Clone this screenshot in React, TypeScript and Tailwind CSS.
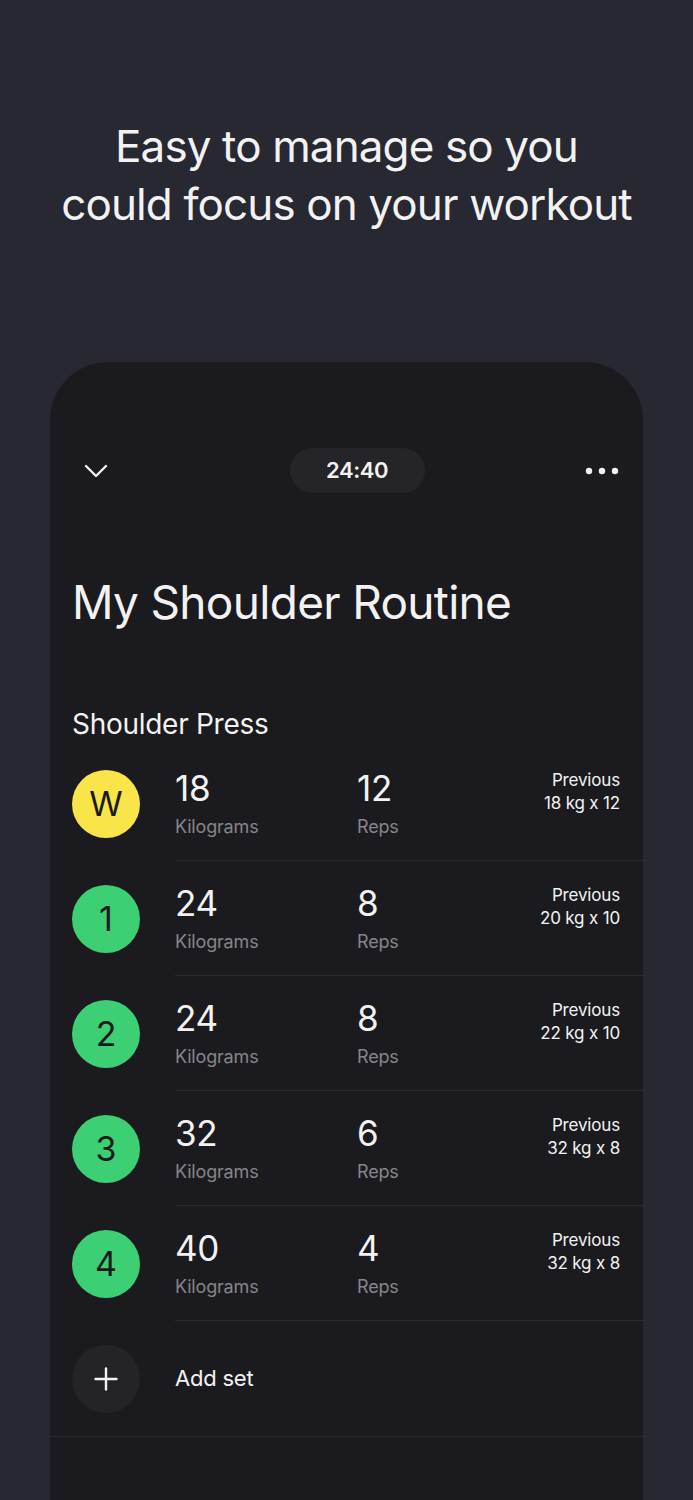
import { Plus } from "lucide-react";

type SetRow = {
  label: string;
  warmup?: boolean;
  kg: number;
  reps: number;
  prev: string;
};

const SETS: SetRow[] = [
  { label: "W", warmup: true, kg: 18, reps: 12, prev: "18 kg x 12" },
  { label: "1", kg: 24, reps: 8, prev: "20 kg x 10" },
  { label: "2", kg: 24, reps: 8, prev: "22 kg x 10" },
  { label: "3", kg: 32, reps: 6, prev: "32 kg x 8" },
  { label: "4", kg: 40, reps: 4, prev: "32 kg x 8" },
];

function ChevronDown() {
  return (
    <svg width="24" height="14" viewBox="0 0 24 14" fill="none">
      <path d="M2 2l10 10L22 2" stroke="#f2f2f2" strokeWidth="2.4" strokeLinecap="round" strokeLinejoin="round" />
    </svg>
  );
}

function Dots() {
  return (
    <svg width="34" height="8" viewBox="0 0 34 8" fill="#f2f2f2">
      <circle cx="4" cy="4" r="3.2" />
      <circle cx="17" cy="4" r="3.2" />
      <circle cx="30" cy="4" r="3.2" />
    </svg>
  );
}

function SetLine({ s }: { s: SetRow }) {
  return (
    <div className="flex h-[115px]">
      <div className="flex w-[104px] shrink-0 items-center">
        <div
          className={
            s.warmup
              ? "flex h-[68px] w-[68px] items-center justify-center rounded-full bg-[#f9e54a] text-[34px] text-[#1b1b1f]"
              : "flex h-[68px] w-[68px] items-center justify-center rounded-full bg-[#3ccf73] text-[34px] text-[#1b1b1f]"
          }
        >
          {s.label}
        </div>
      </div>
      <div className="-ml-[1px] flex flex-1 border-b border-[#2a2a2f] pr-[23px]">
        <div className="w-[182px] pt-[22px]">
          <div className="text-[35px] leading-[40px] tracking-[-0.01em] text-[#f2f2f2]">{s.kg}</div>
          <div className="mt-[7px] text-[18px] leading-[24px] tracking-[-0.01em] text-[#85858a]">Kilograms</div>
        </div>
        <div className="flex-1 pt-[22px]">
          <div className="text-[35px] leading-[40px] tracking-[-0.01em] text-[#f2f2f2]">{s.reps}</div>
          <div className="mt-[7px] text-[18px] leading-[24px] tracking-[-0.01em] text-[#85858a]">Reps</div>
        </div>
        <div className="pt-[23px] text-right text-[17px] leading-[23px] tracking-[-0.01em] text-[#f2f2f2]">
          <div>Previous</div>
          <div>{s.prev}</div>
        </div>
      </div>
    </div>
  );
}

export default function App() {
  return (
    <div
      className="flex h-[1500px] flex-col overflow-hidden bg-[#282832]"
      style={{ fontFamily: "Inter, 'Noto Sans', sans-serif" }}
    >
      <h1 className="pt-[117px] text-center text-[44px] leading-[58px] tracking-[-0.02em] text-[#f2f2f2]">
        Easy to manage so you
        <br />
        could focus on your workout
      </h1>

      <div className="mx-[50px] mt-[129px] flex-1 rounded-t-[58px] bg-[#1b1b1f]">
        <div className="flex items-center justify-between pl-[34px] pr-[24px] pt-[86px]">
          <ChevronDown />
          <div className="ml-[21px] flex h-[45px] w-[135px] items-center justify-center rounded-full bg-[#252529] text-[22px] font-semibold tracking-[-0.02em] text-[#f2f2f2]">
            24:40
          </div>
          <Dots />
        </div>

        <div className="pl-[22px]">
          <h2 className="mt-[81px] text-[46px] leading-[56px] tracking-[-0.015em] text-[#f2f2f2]">
            My Shoulder Routine
          </h2>
          <h3 className="mt-[77px] text-[28px] leading-[34px] tracking-[-0.01em] text-[#f2f2f2]">Shoulder Press</h3>

          <div className="mt-[5px]">
            {SETS.map((s) => (
              <SetLine key={s.label} s={s} />
            ))}
          </div>
        </div>

        <div className="flex h-[116px] items-center border-b border-[#2a2a2f] pl-[22px]">
          <div className="flex w-[103px] shrink-0 items-center">
            <div className="flex h-[68px] w-[68px] items-center justify-center rounded-full bg-[#242428]">
              <Plus size={36} strokeWidth={1.6} color="#f2f2f2" />
            </div>
          </div>
          <span className="text-[22px] tracking-[-0.01em] text-[#f2f2f2]">Add set</span>
        </div>
      </div>
    </div>
  );
}
